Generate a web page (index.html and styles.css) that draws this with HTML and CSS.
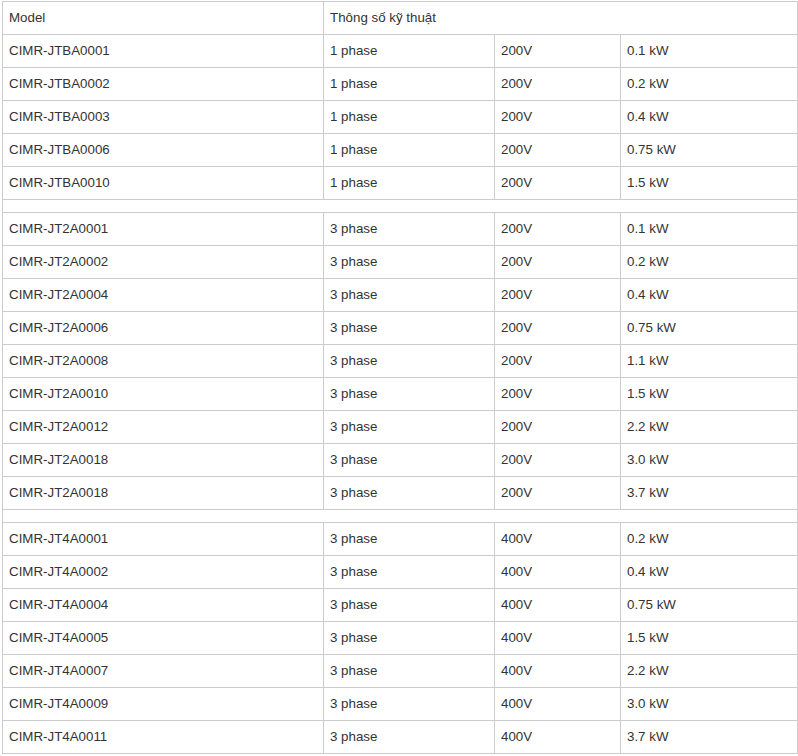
FILE: index.html
```html
<!DOCTYPE html>
<html>
<head>
<meta charset="utf-8">
<link rel="stylesheet" href="styles.css">
</head>
<body>
<table class="spec">
<colgroup><col class="c1"><col class="c2"><col class="c3"><col class="c4"></colgroup>
<tbody>
<tr><td>Model</td><td colspan="3">Thông số kỹ thuật</td></tr>
<tr><td>CIMR-JTBA0001</td><td>1 phase</td><td>200V</td><td>0.1 kW</td></tr>
<tr><td>CIMR-JTBA0002</td><td>1 phase</td><td>200V</td><td>0.2 kW</td></tr>
<tr><td>CIMR-JTBA0003</td><td>1 phase</td><td>200V</td><td>0.4 kW</td></tr>
<tr><td>CIMR-JTBA0006</td><td>1 phase</td><td>200V</td><td>0.75 kW</td></tr>
<tr><td>CIMR-JTBA0010</td><td>1 phase</td><td>200V</td><td>1.5 kW</td></tr>
<tr><td colspan="4" class="gap"></td></tr>
<tr><td>CIMR-JT2A0001</td><td>3 phase</td><td>200V</td><td>0.1 kW</td></tr>
<tr><td>CIMR-JT2A0002</td><td>3 phase</td><td>200V</td><td>0.2 kW</td></tr>
<tr><td>CIMR-JT2A0004</td><td>3 phase</td><td>200V</td><td>0.4 kW</td></tr>
<tr><td>CIMR-JT2A0006</td><td>3 phase</td><td>200V</td><td>0.75 kW</td></tr>
<tr><td>CIMR-JT2A0008</td><td>3 phase</td><td>200V</td><td>1.1 kW</td></tr>
<tr><td>CIMR-JT2A0010</td><td>3 phase</td><td>200V</td><td>1.5 kW</td></tr>
<tr><td>CIMR-JT2A0012</td><td>3 phase</td><td>200V</td><td>2.2 kW</td></tr>
<tr><td>CIMR-JT2A0018</td><td>3 phase</td><td>200V</td><td>3.0 kW</td></tr>
<tr><td>CIMR-JT2A0018</td><td>3 phase</td><td>200V</td><td>3.7 kW</td></tr>
<tr><td colspan="4" class="gap"></td></tr>
<tr><td>CIMR-JT4A0001</td><td>3 phase</td><td>400V</td><td>0.2 kW</td></tr>
<tr><td>CIMR-JT4A0002</td><td>3 phase</td><td>400V</td><td>0.4 kW</td></tr>
<tr><td>CIMR-JT4A0004</td><td>3 phase</td><td>400V</td><td>0.75 kW</td></tr>
<tr><td>CIMR-JT4A0005</td><td>3 phase</td><td>400V</td><td>1.5 kW</td></tr>
<tr><td>CIMR-JT4A0007</td><td>3 phase</td><td>400V</td><td>2.2 kW</td></tr>
<tr><td>CIMR-JT4A0009</td><td>3 phase</td><td>400V</td><td>3.0 kW</td></tr>
<tr><td>CIMR-JT4A0011</td><td>3 phase</td><td>400V</td><td>3.7 kW</td></tr>
</tbody>
</table>
</body>
</html>
```
FILE: styles.css
```css
html, body {
  margin: 0;
  padding: 0;
  background: #fff;
}
body {
  padding: 1px 0 0 2px;
  font-family: "Liberation Sans", Arial, sans-serif;
  font-size: 13.33px;
  color: #333;
}
.spec {
  border-collapse: collapse;
  table-layout: fixed;
  width: 796px;
}
.c1 { width: 321px; }
.c2 { width: 171px; }
.c3 { width: 126px; }
.c4 { width: 177px; }
.spec td {
  border: 1px solid #ccc;
  padding: 6px;
  line-height: 20px;
  height: 20px;
  vertical-align: middle;
  text-align: left;
  white-space: nowrap;
}
.spec td.gap {
  height: 0;
  line-height: 0;
  padding: 6px;
}
```
